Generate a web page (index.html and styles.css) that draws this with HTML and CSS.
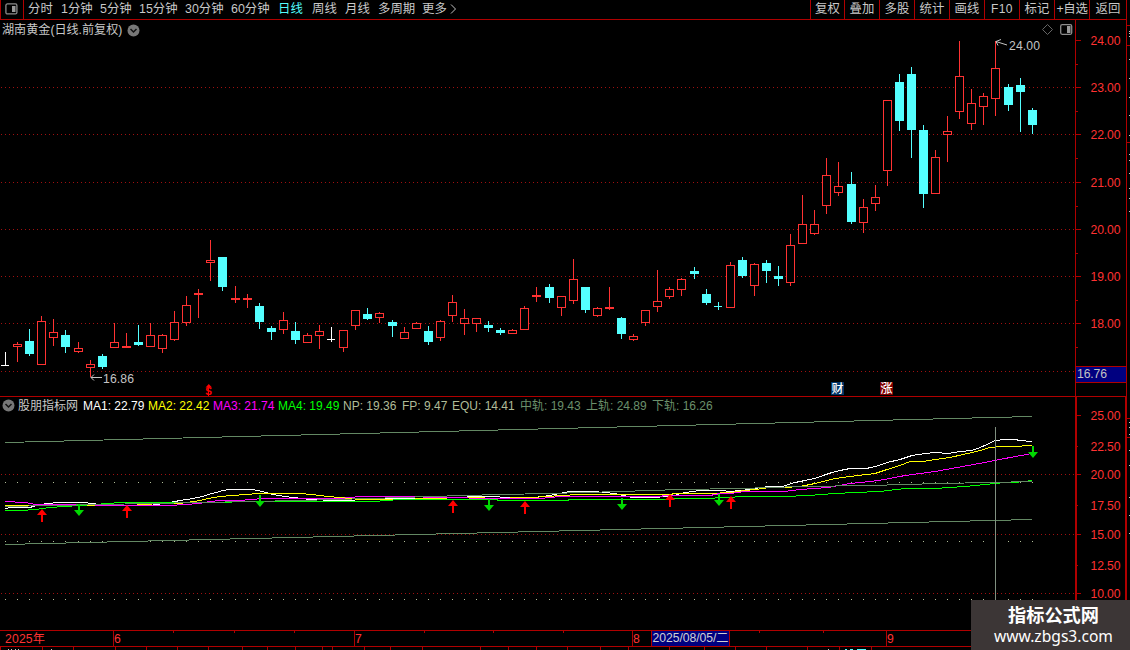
FILE: index.html
```html
<!DOCTYPE html>
<html lang="zh-CN">
<head>
<meta charset="utf-8">
<title>湖南黄金 日线</title>
<link rel="stylesheet" href="styles.css">
</head>
<body>
<div class="app">
  <div class="workspace">
    <header class="toolbar">
      <div class="layout-btn"><svg width="13" height="12" viewBox="0 0 13 12"><rect x=".9" y=".9" width="11" height="10" rx="1.5" fill="none" stroke="#8c8c8c" stroke-width="1.3"/><rect x="7" y="3" width="3.5" height="6" fill="#999"/></svg></div>
      <nav class="periods">
        <span class="p2">分时</span><span class="p3">1分钟</span><span class="p3">5分钟</span><span class="p4">15分钟</span><span class="p4">30分钟</span><span class="p5">60分钟</span><span class="p2w active">日线</span><span class="p2v">周线</span><span class="p2v">月线</span><span class="p6">多周期</span><span class="more">更多</span><svg class="chev" width="8" height="10" viewBox="0 0 8 10"><path d="M1 .5L5.5 5L1 9.500" fill="none" stroke="#c0c0c0"/></svg>
      </nav>
      <nav class="actions">
        <span class="first">复权</span><span>叠加</span><span>多股</span><span>统计</span><span>画线</span><span class="wide">F10</span><span>标记</span><span class="tight">+自选</span><span class="last">返回</span>
      </nav>
    </header>

    <section class="panel price">
      <svg class="plot" id="price" width="1075" height="376" viewBox="0 20 1075 376"></svg>
      <svg class="axis" id="price-axis" width="52" height="376" viewBox="1075 20 52 376"></svg>
      <div class="title"><span>湖南黄金(日线.前复权)</span><svg width="13" height="13" viewBox="0 0 13 13"><circle cx="6.500" cy="6.500" r="6" fill="#777"/><path d="M3.500 5L6.500 8L9.500 5" fill="none" stroke="#111" stroke-width="1.5"/></svg></div>
    </section>

    <section class="panel study">
      <svg class="plot" id="study" width="1075" height="233" viewBox="0 397 1075 233"></svg>
      <svg class="axis" id="study-axis" width="52" height="233" viewBox="1075 397 52 233"></svg>
      <div class="legend">
        <svg width="13" height="13" viewBox="0 0 13 13"><circle cx="6.500" cy="6.500" r="6" fill="#777"/><path d="M3.500 5L6.500 8L9.500 5" fill="none" stroke="#111" stroke-width="1.5"/></svg>
        <span class="name">股朋指标网</span><span class="ma ma1">MA1: 22.79</span><span class="ma ma2">MA2: 22.42</span><span class="ma ma3">MA3: 21.74</span><span class="ma ma4">MA4: 19.49</span><span class="np">NP: 19.36</span><span class="fp">FP: 9.47</span><span class="equ">EQU: 14.41</span><span class="band">中轨: 19.43</span><span class="band">上轨: 24.89</span><span class="band">下轨: 16.26</span>
      </div>
    </section>

    <footer class="dates"><svg id="dates" width="1127" height="20" viewBox="0 630 1127 20"></svg></footer>
  </div>
  <svg class="rail" id="rail" width="3" height="650" viewBox="1127 0 3 650"></svg>
  <aside class="brand"><strong>指标公式网</strong><span>www.zbgs3.com</span></aside>
</div>
<script src="script.js"></script>
</body>
</html>
```
FILE: styles.css
```css
body { margin: 0; background: #000; overflow: hidden; }
.app { position: relative; display: flex; width: 1130px; height: 650px; overflow: hidden; background: #000; color: #c8c8c8; font: 12.4px "Liberation Sans", "Noto Sans CJK SC", sans-serif; }
.workspace { display: flex; flex-direction: column; width: 1127px; }
svg { display: block; flex: none; }
.toolbar { display: flex; box-sizing: border-box; height: 20px; border-bottom: 1px solid #b00000; line-height: 19px; white-space: nowrap; }
.layout-btn { box-sizing: border-box; width: 24px; padding: 3px 0 0 4px; border-left: 1px solid #b00000; border-right: 1px solid #b00000; }
.periods { display: flex; flex: 1; padding-left: 4px; }
.p2 { width: 33px; }
.p3 { width: 39px; }
.p4 { width: 46px; }
.p5 { width: 47px; }
.p2w { width: 34px; }
.p2v { width: 33px; }
.p6 { width: 44px; }
.more { width: 28px; }
.chev { margin-top: 4px; }
.active { color: #54fcfc; }
.actions { display: flex; }
.actions span { box-sizing: border-box; width: 35px; height: 19px; border-left: 1px solid #b00000; text-align: center; }
.actions .first { width: 34px; }
.actions .last { width: 38px; border-right: 1px solid #b00000; }
.actions .tight { letter-spacing: -0.3px; }
.actions .wide { font-size: 12px; letter-spacing: .4px; }
.panel { position: relative; display: flex; border-bottom: 1px solid #b00000; }
.study { border-bottom: 0; }
.title { position: absolute; left: 2px; top: 1px; display: flex; align-items: center; gap: 5px; line-height: 17px; white-space: nowrap; font-size: 12.1px; }
.title span { padding-top: 1px; }
.legend { position: absolute; left: 2px; top: 0; display: flex; align-items: center; line-height: 16px; white-space: nowrap; font-size: 12px; }
.legend span { padding-top: 1px; }
.name { width: 65px; }
.legend .name { padding-left: 3px; }
.ma { width: 65px; }
.ma1 { color: #fff; }
.ma2 { color: #ff0; }
.ma3 { color: #f0f; }
.ma4 { color: #0f0; }
.np, .fp, .equ { color: #b0bc98; }
.np { width: 59px; }
.fp { width: 50px; }
.equ { width: 68px; }
.band { width: 66px; color: #6b906b; }
.brand { position: absolute; left: 971px; top: 600px; box-sizing: border-box; width: 159px; height: 50px; padding: 2px 0 0 6px; display: flex; flex-direction: column; align-items: center; background: #3c3636; color: #fff; font-family: "Noto Sans CJK SC", sans-serif; white-space: nowrap; }
.brand strong { font-size: 18.2px; line-height: 25px; font-weight: 700; }
.brand span { font: 15.6px/20px "Noto Sans", sans-serif; margin-top: -1px; }
svg text { font-size: 12.2px; font-family: "Liberation Sans", "Noto Sans CJK SC", sans-serif; }
```
FILE: script.js
```js
// Each candle: kind, centre x, high, body top, body bottom, low.
const candles = `r 17 342 344 347 362,c 29 329 341 354 356,r 41 316 321 365 365,r 53 319 332 338 346,c 65 330 335 347 353,r 78 342 348 352 353,r 90 360 364 368 377,c 102 354 356 367 369,r 114 323 342 348 348,r 126 333 346 348 348,c 138 325 342 345 346,r 150 323 335 347 347,r 162 334 335 349 353,r 174 311 322 340 341,r 186 296 305 323 326,r 198 289 293 295 318,r 210 240 260 263 281,c 222 257 257 287 291,r 235 286 298 300 303,r 247 294 298 300 308,c 259 303 306 322 329,c 271 326 328 332 340,r 283 312 320 330 334,c 295 322 331 340 344,r 307 333 335 343 343,r 319 325 331 336 349,r 343 330 330 348 352,r 355 310 310 326 330,c 367 308 314 319 320,r 379 312 313 318 323,c 392 320 322 326 337,r 404 327 332 339 339,r 416 322 323 329 329,c 428 326 331 342 345,r 440 320 321 338 341,r 452 295 302 316 322,r 464 309 318 324 335,r 476 318 318 324 332,c 488 321 325 328 332,c 500 328 330 333 335,r 512 329 330 334 334,r 524 306 308 330 330,r 536 287 295 297 302,c 549 284 287 298 303,r 561 296 296 308 316,r 573 259 279 301 304,c 585 287 287 310 313,r 597 307 308 316 317,r 609 287 307 309 310,c 621 317 318 334 339,r 633 334 336 340 341,r 645 310 310 323 326,r 657 270 301 307 312,r 669 287 289 297 299,r 681 278 279 290 296,c 694 267 271 274 279,c 706 289 294 303 305,c 718 302 306 307 310,r 730 262 265 308 308,c 742 257 260 276 278,r 754 263 264 286 296,c 766 260 263 271 283,c 778 266 276 279 286,r 790 234 245 283 286,r 802 195 224 244 244,r 814 210 224 234 235,r 826 158 175 206 214,r 838 162 186 193 196,c 851 172 184 222 224,r 863 199 207 223 233,r 875 185 197 204 211,r 887 100 100 171 186,c 899 74 82 121 131,c 911 67 74 130 158,c 923 125 130 194 208,r 935 150 157 194 194,r 947 116 131 135 162,r 959 41 76 112 119,r 971 89 103 124 130,r 983 93 96 107 125,r 995 41 68 99 116,c 1008 84 87 105 111,c 1020 78 85 92 132,c 1032 108 110 125 134,w 5 352 365 366 366,w 331 327 339 340 342`
  .split(',').map(s => s.split(' '));
const ink = { r: '#ff3232', c: '#54ffff', w: '#ffffff' };
const RED = '#b00000';
const rect = (x, y, w, h, fill) => `<rect x="${x}" y="${y}" width="${w}" height="${h}" fill="${fill}" shape-rendering="crispEdges"/>`;
const text = (x, y, s, fill, len) => `<text x="${x}" y="${y}" fill="${fill}"${len ? ` textLength="${len}"` : ''}>${s}</text>`;
const dots = (y, from, to, step, fill) => `<path d="M${from} ${y + .5}H${to}" stroke="${fill}" stroke-dasharray="1 ${step - 1}" shape-rendering="crispEdges"/>`;
const put = (id, s) => { document.getElementById(id).innerHTML = s; };

let s = '';
[87, 134, 182, 229, 276, 323, 371].forEach(y => { s += dots(y, 1, 1075, 4, '#a01010'); });
candles.forEach(([k, ...n]) => {
  const [x, hi, top, bot, lo] = n.map(Number);
  const f = ink[k];
  s += rect(x, hi, 1, top - hi, f) + rect(x, bot, 1, lo - bot, f);
  const thin = bot - top < 2;
  s += rect(x - 4, top, thin ? 8 : 9, bot - top, f);
  if (k === 'r' && bot - top > 2) s += rect(x - 3, top + 1, 7, bot - top - 2, '#000');
});
s += '<path d="M91 377.5H102M91 377.5L94 374.5M91 377.5L94 380.500M996 41.500L1007 45M996 41.500L1001 39.500M996 41.500L998 45.500" stroke="#c4c4c4" fill="none"/>';
s += text(103, 383, '16.86', '#c4c4c4', 31) + text(1009, 50, '24.00', '#c4c4c4', 31);
s += '<path d="M1042.500 29.500L1047.500 24.500L1052.500 29.500L1047.500 34.500Z" fill="none" stroke="#666"/><rect x="1060.700" y="24.700" width="11" height="9.600" rx="1.500" fill="none" stroke="#8c8c8c" stroke-width="1.300"/><rect x="1067" y="26" width="3.500" height="7" fill="#999"/>';
s += '<path d="M205.500 387.500L208.800 384L212 387.500Z" fill="#f00"/><text x="205.300" y="395" fill="#f00" style="font-size:10px;font-weight:bold">S</text><path d="M208.500 386V396" stroke="#f00"/>';
s += rect(831, 382, 13, 13, '#003468') + rect(880, 382, 13, 13, '#800000');
s += '<text x="831.500" y="393" fill="#fff" style="font-size:12px;font-weight:500">财</text><text x="880.500" y="393" fill="#fff" style="font-size:12px;font-weight:500">涨</text>';
put('price', s);

s = rect(1075, 20, 1, 376, RED) + rect(1126, 20, 1, 376, RED);
[40, 87, 134, 182, 229, 276, 323].forEach((y, i) => {
  s += rect(1076, y, 5, 1, RED) + rect(1076, y + 24, 2, 1, RED) + text(1090.500, y + 5, (24 - i) + '.00', '#ff3232', 30);
});
s += rect(1076, 366, 50, 17, RED) + rect(1076, 367, 50, 15, '#000080') + text(1077, 378, '16.76', '#c4c4c4', 30);
put('price-axis', s);

const line = (pts, c) => `<polyline points="${pts}" transform="translate(0 .5)" fill="none" stroke="${c}" shape-rendering="crispEdges"/>`;
s = [474, 534, 593].map(y => dots(y, 1, 1075, 4, '#a01010')).join('');
[482, 541, 599].forEach(y => {
  s += candles.map(c => rect(c[1], y, 1, 1, '#b0bc98')).join('');
});
s += line('5,442 1032,416', '#638863') + line('5,544 1032,519', '#638863');
s += line('5,508 12,507 30,507 36,505 47,503 60,502 83,502 93,503 105,505 150,505 170,502 180,500 193,498 203,496 208,494 216,492 223,490 230,489 252,489 258,490 266,492 273,494 285,496 310,499 335,500 350,500 370,498 415,498 485,496 495,496 515,498 525,498 543,496 555,494 570,491 592,491 605,492 615,493 632,497 650,497 670,496 685,492 700,490 722,490 730,491 750,489 760,487 770,486 782,486 795,482 805,480 815,478 823,475 832,472 840,470 850,468 866,468 876,466 887,462 900,459 912,455 925,453 935,452 948,453 960,451 972,450 980,447 987,444 995,440 1005,439 1015,439 1020,440 1032,441', '#fff');
s += line('5,505 24,505 85,505 130,505 160,503 180,503 200,500 208,498 220,496 245,494 260,493 300,493 312,494 328,496 350,498 360,499 395,499 435,498 460,497 480,497 490,498 530,497 548,496 560,495 580,494 670,494 675,493 710,493 730,492 745,490 755,489 770,487 785,487 800,486 815,483 835,478 858,475 875,473 887,469 900,465 910,461 923,461 935,459 950,457 963,454 972,452 980,450 990,447 1000,446 1013,446 1032,445', '#ff0');
s += line('5,501 25,502 36,504 80,504 110,505 170,505 185,504 200,503 210,501 220,500 240,500 250,499 265,498 340,498 360,496 410,496 435,497 500,498 540,498 560,496 660,496 665,495 710,495 720,493 730,493 745,491 784,491 800,489 815,488 828,487 850,483 870,481 885,479 905,475 935,471 957,467 990,461 1010,457 1032,453', '#f0f');
s += line('5,510 22,510 35,509 50,507 80,505 108,503 120,502 200,502 265,501 373,501 400,499 495,499 500,500 567,500 570,499 663,499 675,498 700,498 730,497 740,496 784,496 808,495 835,493 855,492 880,491 905,488 935,488 965,486 985,484 1005,482 1015,482 1032,480', '#0f0');
s += line('5,506 100,504 200,502 300,500 370,498 430,496 500,494 550,493 620,491 680,489 740,488 800,486 870,485 940,483 990,482 1032,481', '#638863');
s += rect(995, 427, 1, 173, '#809080');
[[42, 509], [127, 505], [453, 500], [525, 501], [670, 494], [731, 496]].forEach(([x, y]) => {
  s += `<path d="M${x} ${y}L${x + 5} ${y + 6}H${x + 1}V${y + 13}H${x - 1}V${y + 6}H${x - 5}Z" fill="#f00"/>`;
});
[[79, 504], [260, 495], [489, 499], [622, 498], [719, 494], [1033, 446]].forEach(([x, y]) => {
  s += `<path d="M${x - 1} ${y}H${x + 1}V${y + 6}H${x + 5}L${x} ${y + 12}L${x - 5} ${y + 6}H${x - 1}Z" fill="#00d800"/>`;
});
put('study', s);

s = rect(1075, 397, 2, 233, RED) + rect(1125, 397, 2, 233, RED);
[[415, '25.00'], [446, '22.50'], [474, '20.00'], [505, '17.50'], [534, '15.00'], [565, '12.50'], [593, '10.00']].forEach(([y, t], i) => {
  s += rect(1077, y, i % 2 ? 1 : 4, 1, RED) + text(1090.500, y + 5, t, '#ff3232', 30);
});
put('study-axis', s);

s = rect(0, 630, 1127, 1, RED) + rect(0, 646, 1127, 1, RED);
[113, 354, 632, 886].forEach(x => { s += rect(x, 630, 1, 17, RED); });
[173, 234, 294, 424, 493, 563, 759, 823].forEach(x => { s += rect(x, 631, 1, 2, RED); });
[0, 42, 73, 115, 146, 177, 208, 242, 267, 295, 322, 332, 364, 390, 422, 480, 508, 536, 567, 600, 628, 669, 704, 735, 766, 807, 839, 871].forEach(x => { s += rect(x, 647, 1, 3, RED); });
s += text(5, 643, '2025年', '#ff3232', 40) + text(114, 643, '6', '#ff3232') + text(355, 643, '7', '#ff3232') + text(633, 643, '8', '#ff3232') + text(887, 643, '9', '#ff3232');
s += rect(651, 631, 79, 15, RED) + rect(652, 631, 77, 15, '#000080') + text(652.500, 642, '2025/08/05/二', '#d0d0d0', 76);
[8, 11, 15, 18, 51].forEach(x => { s += rect(x, 649, 1, 1, '#c4c4c4'); });
s += rect(828, 649, 1, 1, '#c4c4c4') + rect(845, 649, 2, 1, '#54ffff') + rect(850, 649, 3, 1, '#54ffff') + rect(857, 649, 9, 1, '#54ffff');
put('dates', s);

s = [25, 45, 142, 418, 437].map(y => rect(1127, y, 3, 1, RED)).join('');
[31, 33, 36, 59, 78, 97, 115, 135, 154, 160, 173, 188, 198, 211, 422, 427, 434, 450, 465, 497, 515, 533].forEach(y => { s += rect(1129, y, 1, 1, '#c4c4c4'); });
put('rail', s);
```
